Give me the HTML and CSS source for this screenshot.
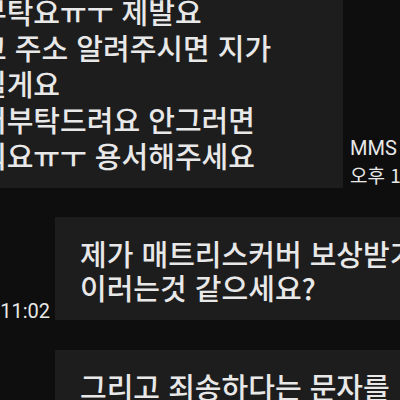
FILE: index.html
```html
<!DOCTYPE html>
<html lang="ko">
<head>
    <meta charset="UTF-8">
    <meta name="viewport" content="width=device-width, initial-scale=1.0">
    <title>메시지</title>
    <link rel="stylesheet" href="styles.css">
</head>
<body>
    <div class="thread">
        <div class="row">
            <div class="bubble top">
                <p class="line">부탁요ㅠㅜ 제발요</p>
                <p class="line">고 주소 알려주시면 지가</p>
                <p class="line">릴게요</p>
                <p class="line">어부탁드려요 안그러면</p>
                <p class="line">워요ㅠㅜ 용서해주세요</p>
            </div>
            <div class="meta">
                <span class="kind">MMS</span>
                <span class="when">오후 11:01</span>
            </div>
        </div>

        <div class="row">
            <span class="time">11:02</span>
            <div class="bubble side">
                <p class="line">제가 매트리스커버 보상받기 위해서</p>
                <p class="line">이러는것 같으세요?</p>
            </div>
        </div>

        <div class="row last">
            <span class="time"></span>
            <div class="bubble side">
                <p class="line">그리고 죄송하다는 문자를</p>
                <p class="line">보내주세요</p>
            </div>
        </div>
    </div>
</body>
</html>
```

FILE: styles.css
```css
body {
    margin: 0;
    width: 400px;
    height: 400px;
    overflow: hidden;
    background-color: #0e0e0e;
    font-family: "Noto Sans CJK KR", "Noto Sans", sans-serif;
    color: #e8e8e8;
}

.thread {
    display: flex;
    flex-direction: column;
    gap: 29px;
    margin-top: -23px;
}

.row {
    display: flex;
    align-items: flex-end;
    gap: 5px;
}

.row.last {
    margin-top: 1px;
}

.bubble {
    background-color: #1d1d1d;
    white-space: nowrap;
    overflow: hidden;
}

.line {
    margin: 0;
    font-size: 29px;
    font-weight: 500;
    line-height: 36px;
}

.top {
    width: 379px;
    margin-left: -36px;
    padding: 16px 0 15px 16px;
    box-sizing: border-box;
    flex: none;
}

.meta {
    display: flex;
    flex-direction: column;
    margin-left: 2px;
    white-space: nowrap;
}

.kind {
    font-family: Roboto, "Liberation Sans", sans-serif;
    font-size: 20px;
    line-height: 26px;
}

.when {
    font-size: 19px;
    line-height: 27px;
}

.time {
    width: 50px;
    flex: none;
    text-align: right;
    font-family: Roboto, "Liberation Sans", sans-serif;
    font-size: 20px;
    line-height: 24px;
    margin-bottom: -3px;
}

.side {
    flex: 1;
    margin-right: -80px;
    padding: 19px 0 16px 25px;
}

.side .line {
    line-height: 34px;
}
```
